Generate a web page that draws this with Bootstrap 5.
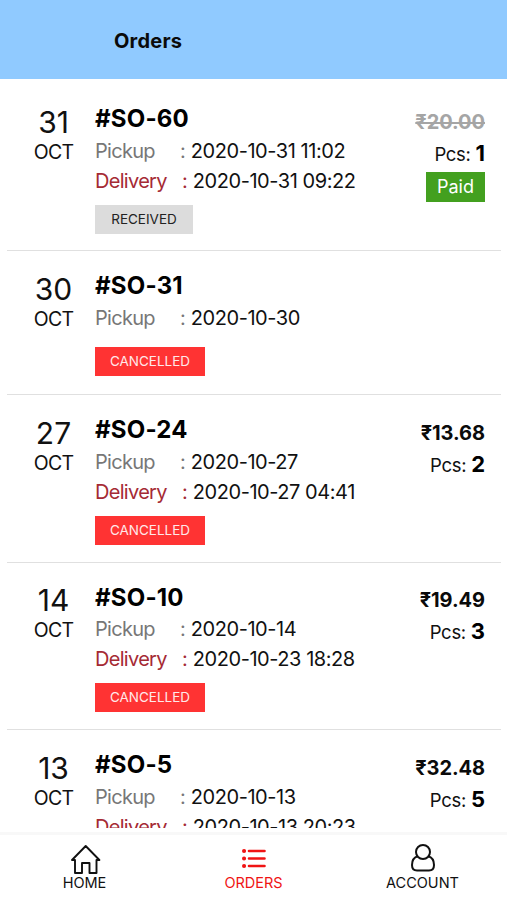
<!DOCTYPE html>
<html lang="en">
<head>
<meta charset="utf-8">
<meta name="viewport" content="width=device-width, initial-scale=1">
<title>Orders</title>
<link href="https://cdn.jsdelivr.net/npm/bootstrap@5.3.0/dist/css/bootstrap.min.css" rel="stylesheet">
<style>
body { font-family: Inter, "Liberation Sans", sans-serif; color: #111; font-size: 20px; }
.topbar { height: 79px; background: #90caff; padding: 3px 0 0 114px; }
.topbar h1 { font-size: 20px; font-weight: 700; color: #0a0a0a; letter-spacing: .2px; }
.orders { padding: 5px 6px 0 7px; }
.order { height: 167.4px; border-bottom: 1.5px solid #e0e0e0; padding: 18px 16px 0 0; }
.order-short { height: 144px; }
.date { width: 93px; line-height: 30px; padding-top: 4.5px; }
.day { font-size: 30px; }
.month { font-size: 19.5px; letter-spacing: -.7px; }
.num { font-size: 24px; font-weight: 700; line-height: 33.5px; color: #000; letter-spacing: .2px; }
.info { margin-left: -5px; white-space: nowrap; }
.line { line-height: 30px; letter-spacing: -.45px; }
.lbl { width: 85px; letter-spacing: -.7px; }
.lbl-d { width: 87px; }
.dt { margin-left: 5.5px; }
.pickup { color: #777; }
.delivery { color: #a52a34; }
.status { font-size: 13.5px; height: 29px; line-height: 29px; margin-top: 9px; }
.order-short .status { margin-top: 14.5px; }
.received { background: #dcdcdc; width: 98px; color: #222; }
.cancelled { background: #ff3333; width: 110px; color: #ffe9e9; }
.price { font-weight: 700; line-height: 30px; padding-top: 4.5px; color: #0a0a0a; letter-spacing: -.05px; }
.old { color: #a5a5a5; text-decoration: line-through; text-decoration-thickness: 1.5px; }
.pcs { font-size: 18.5px; line-height: 33px; letter-spacing: -.3px; }
.pcs b { font-size: 22px; font-weight: 700; color: #000; letter-spacing: 0; }
.paid { background: #43a01f; color: #fff; width: 59px; height: 30px; line-height: 30px; font-size: 18px; margin-top: 1px; }
.tabs { height: 72px; border-top: 4px solid #fff; }
.tab-row { border-top: 3px solid #f8f8f8; }
.tab-row a { flex: 1 1 0; font-size: 14.5px; line-height: 18px; color: #111; padding-top: 7px; }
.tab-row a.on { color: #f01414; }
</style>
</head>
<body class="bg-white">
<div class="vh-100 d-flex flex-column overflow-hidden">
<header class="topbar d-flex align-items-center flex-shrink-0"><h1 class="m-0">Orders</h1></header>
<main class="orders flex-grow-1 overflow-hidden">
  <article class="order d-flex">
    <div class="date text-center"><div class="day">31</div><div class="month">OCT</div></div>
    <div class="info flex-grow-1"><div class="num">#SO-60</div>
      <div class="line d-flex"><span class="lbl pickup">Pickup</span><span class="pickup">:</span><span class="dt">2020-10-31 11:02</span></div>
      <div class="line d-flex"><span class="lbl lbl-d delivery">Delivery</span><span class="delivery">:</span><span class="dt">2020-10-31 09:22</span></div>
      <div class="status received text-center">RECEIVED</div></div>
    <div class="text-end"><div class="price old">₹20.00</div><div class="pcs">Pcs: <b>1</b></div><div class="paid text-center ms-auto">Paid</div></div>
  </article>
  <article class="order order-short d-flex">
    <div class="date text-center"><div class="day">30</div><div class="month">OCT</div></div>
    <div class="info flex-grow-1"><div class="num">#SO-31</div>
      <div class="line d-flex"><span class="lbl pickup">Pickup</span><span class="pickup">:</span><span class="dt">2020-10-30</span></div>
      <div class="status cancelled text-center">CANCELLED</div></div>
  </article>
  <article class="order d-flex">
    <div class="date text-center"><div class="day">27</div><div class="month">OCT</div></div>
    <div class="info flex-grow-1"><div class="num">#SO-24</div>
      <div class="line d-flex"><span class="lbl pickup">Pickup</span><span class="pickup">:</span><span class="dt">2020-10-27</span></div>
      <div class="line d-flex"><span class="lbl lbl-d delivery">Delivery</span><span class="delivery">:</span><span class="dt">2020-10-27 04:41</span></div>
      <div class="status cancelled text-center">CANCELLED</div></div>
    <div class="text-end"><div class="price">₹13.68</div><div class="pcs">Pcs: <b>2</b></div></div>
  </article>
  <article class="order d-flex">
    <div class="date text-center"><div class="day">14</div><div class="month">OCT</div></div>
    <div class="info flex-grow-1"><div class="num">#SO-10</div>
      <div class="line d-flex"><span class="lbl pickup">Pickup</span><span class="pickup">:</span><span class="dt">2020-10-14</span></div>
      <div class="line d-flex"><span class="lbl lbl-d delivery">Delivery</span><span class="delivery">:</span><span class="dt">2020-10-23 18:28</span></div>
      <div class="status cancelled text-center">CANCELLED</div></div>
    <div class="text-end"><div class="price">₹19.49</div><div class="pcs">Pcs: <b>3</b></div></div>
  </article>
  <article class="order d-flex">
    <div class="date text-center"><div class="day">13</div><div class="month">OCT</div></div>
    <div class="info flex-grow-1"><div class="num">#SO-5</div>
      <div class="line d-flex"><span class="lbl pickup">Pickup</span><span class="pickup">:</span><span class="dt">2020-10-13</span></div>
      <div class="line d-flex"><span class="lbl lbl-d delivery">Delivery</span><span class="delivery">:</span><span class="dt">2020-10-13 20:23</span></div></div>
    <div class="text-end"><div class="price">₹32.48</div><div class="pcs">Pcs: <b>5</b></div></div>
  </article>
</main>
<nav class="tabs flex-shrink-0 bg-white"><div class="tab-row d-flex">
  <a class="d-flex flex-column align-items-center text-decoration-none" href="#">
    <svg width="32" height="32" viewBox="0 0 32 32" fill="none" stroke="#111" stroke-width="1.9" stroke-linejoin="round" stroke-linecap="round"><path d="M3 18 16.700 4 30.400 18H27.500V31H20.500V21H13V31H6V18Z"/></svg>
    <span>HOME</span></a>
  <a class="on d-flex flex-column align-items-center text-decoration-none" href="#">
    <svg width="32" height="32" viewBox="0 0 32 32" fill="none" stroke="#f01414" stroke-width="2.6" stroke-linecap="round"><path d="M11 9H26.500M11 16.500H26.500M11 24H26.500"/><path d="M6 9h.1M6 16.500h.1M6 24h.1" stroke-width="4"/></svg>
    <span>ORDERS</span></a>
  <a class="d-flex flex-column align-items-center text-decoration-none" href="#">
    <svg width="32" height="32" viewBox="0 0 32 32" fill="none" stroke="#111" stroke-width="2"><circle cx="16" cy="10" r="7"/><path d="M10.500 14.300C7 15.500 5 18.500 5 23C5 26.500 6.500 28.500 10 28.500H22C25.500 28.500 27 26.500 27 23C27 18.500 25 15.500 21.500 14.300"/></svg>
    <span>ACCOUNT</span></a>
</div></nav>
</div>
<script src="https://cdn.jsdelivr.net/npm/bootstrap@5.3.0/dist/js/bootstrap.bundle.min.js"></script>
</body>
</html>
